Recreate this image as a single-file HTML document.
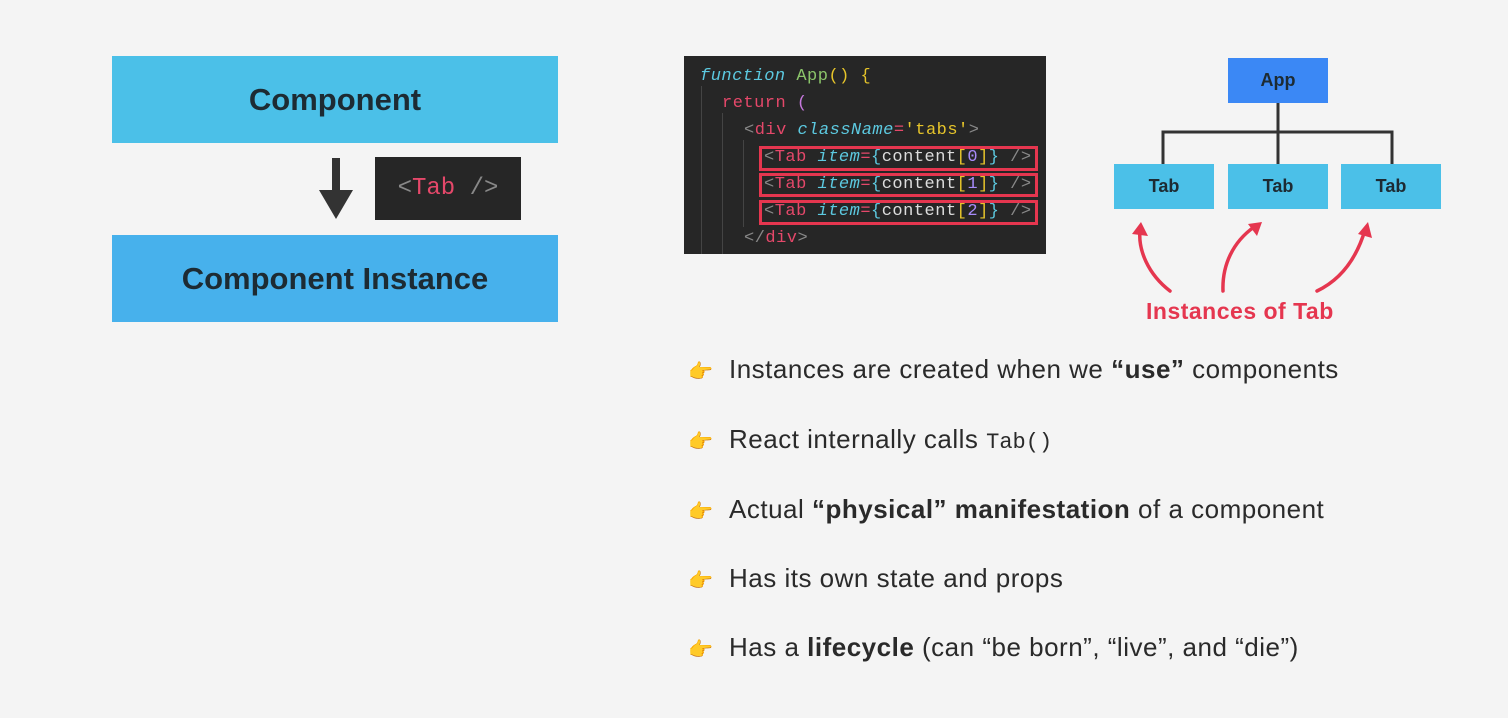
<!DOCTYPE html>
<html><head><style>
body{margin:0;width:1508px;height:718px;background:#f4f4f4;position:relative;overflow:hidden;font-family:"Liberation Sans",sans-serif}
.a{position:absolute}
.box{display:flex;align-items:center;justify-content:center;font-weight:bold;color:#1d2b33}
.code{font-family:"Liberation Mono",monospace;font-size:17px;letter-spacing:0.5px;color:#ddd;white-space:pre}
.code div{position:absolute;height:27px;line-height:27px}
.rb{position:absolute;border:3px solid #e5364f;box-sizing:border-box}
.b{position:absolute;left:688px;font-size:26px;letter-spacing:0.5px;color:#2a2a2a;height:30px;line-height:30px}
.b span.e{display:inline-block;width:41px;font-size:20px;letter-spacing:0}
.mono{font-family:"Liberation Mono",monospace;font-size:22px;letter-spacing:0}
</style></head><body>
<div class="a box" style="left:112px;top:56px;width:446px;height:87px;background:#4bc0e8;font-size:31px">Component</div>
<div class="a box" style="left:112px;top:235px;width:446px;height:87px;background:#47b1ec;font-size:31px">Component Instance</div>
<svg class="a" style="left:318px;top:158px" width="36" height="62"><rect x="14" y="0" width="8" height="34" fill="#333"/><polygon points="1,32 35,32 18,61" fill="#333"/></svg>
<div class="a" style="left:375px;top:157px;width:146px;height:63px;background:#262626;font-family:'Liberation Mono',monospace;font-size:24px;line-height:63px;text-align:center;color:#888"><span>&lt;</span><span style="color:#e5486a">Tab</span> /&gt;</div>

<div class="a code" style="left:684px;top:56px;width:362px;height:198px;background:#262626">
<div style="left:16px;top:7px"><i style="color:#5cc9e0">function</i> <span style="color:#8bc56a">App</span><span style="color:#e6c42a">() {</span></div>
<div style="left:38px;top:34px"><span style="color:#e5486a">return</span> <span style="color:#c678dd">(</span></div>
<div style="left:60px;top:61px"><span style="color:#888">&lt;</span><span style="color:#e5486a">div</span> <i style="color:#5cc9e0">className</i><span style="color:#e5486a">=</span><span style="color:#e6c42a">'tabs'</span><span style="color:#888">&gt;</span></div>
<div style="left:80px;top:88px"><span style="color:#888">&lt;</span><span style="color:#e5486a">Tab</span> <i style="color:#5cc9e0">item</i><span style="color:#e5486a">=</span><span style="color:#5cc9e0">{</span>content<span style="color:#e6c42a">[</span><span style="color:#a78bfa">0</span><span style="color:#e6c42a">]</span><span style="color:#5cc9e0">}</span> <span style="color:#888">/&gt;</span></div>
<div style="left:80px;top:115px"><span style="color:#888">&lt;</span><span style="color:#e5486a">Tab</span> <i style="color:#5cc9e0">item</i><span style="color:#e5486a">=</span><span style="color:#5cc9e0">{</span>content<span style="color:#e6c42a">[</span><span style="color:#a78bfa">1</span><span style="color:#e6c42a">]</span><span style="color:#5cc9e0">}</span> <span style="color:#888">/&gt;</span></div>
<div style="left:80px;top:142px"><span style="color:#888">&lt;</span><span style="color:#e5486a">Tab</span> <i style="color:#5cc9e0">item</i><span style="color:#e5486a">=</span><span style="color:#5cc9e0">{</span>content<span style="color:#e6c42a">[</span><span style="color:#a78bfa">2</span><span style="color:#e6c42a">]</span><span style="color:#5cc9e0">}</span> <span style="color:#888">/&gt;</span></div>
<div style="left:60px;top:169px"><span style="color:#888">&lt;/</span><span style="color:#e5486a">div</span><span style="color:#888">&gt;</span></div>
<div style="left:17px;top:30px;width:1px;height:168px;background:#444"></div>
<div style="left:38px;top:57px;width:1px;height:141px;background:#444"></div>
<div style="left:59px;top:84px;width:1px;height:87px;background:#444"></div>
<div class="rb" style="left:75px;top:90px;width:279px;height:25px"></div>
<div class="rb" style="left:75px;top:117px;width:279px;height:24px"></div>
<div class="rb" style="left:75px;top:144px;width:279px;height:25px"></div>
</div>

<svg class="a" style="left:1100px;top:50px" width="360" height="280">
<path d="M178 53V82M63 114V82H292V114M178 82V114" stroke="#333" stroke-width="3" fill="none"/>
<g fill="none" stroke="#e5364f" stroke-width="3.5" stroke-linecap="round">
<path d="M70 241C48 224 38 200 40 180"/>
<path d="M123 241C122 215 133 192 154 177"/>
<path d="M217 241C240 230 256 210 265 180"/>
</g>
<g fill="#e5364f"><polygon points="32,184 41,172 48,186"/><polygon points="148,174 162,172 157,186"/><polygon points="258,184 268,172 272,188"/></g>
</svg>
<div class="a box" style="left:1228px;top:58px;width:100px;height:45px;background:#3b88f5;font-size:18px">App</div>
<div class="a box" style="left:1114px;top:164px;width:100px;height:45px;background:#4bc0e8;font-size:18px">Tab</div>
<div class="a box" style="left:1228px;top:164px;width:100px;height:45px;background:#4bc0e8;font-size:18px">Tab</div>
<div class="a box" style="left:1341px;top:164px;width:100px;height:45px;background:#4bc0e8;font-size:18px">Tab</div>
<div class="a" style="left:1146px;top:298px;font-size:23px;letter-spacing:0.5px;font-weight:bold;color:#e5364f">Instances of Tab</div>

<div class="b" style="top:354px"><span class="e">👉</span>Instances are created when we <b>“use”</b> components</div>
<div class="b" style="top:424px"><span class="e">👉</span>React internally calls <span class="mono">Tab()</span></div>
<div class="b" style="top:494px"><span class="e">👉</span>Actual <b>“physical” manifestation</b> of a component</div>
<div class="b" style="top:563px"><span class="e">👉</span>Has its own state and props</div>
<div class="b" style="top:632px"><span class="e">👉</span>Has a <b>lifecycle</b> (can “be born”, “live”, and “die”)</div>
</body></html>
